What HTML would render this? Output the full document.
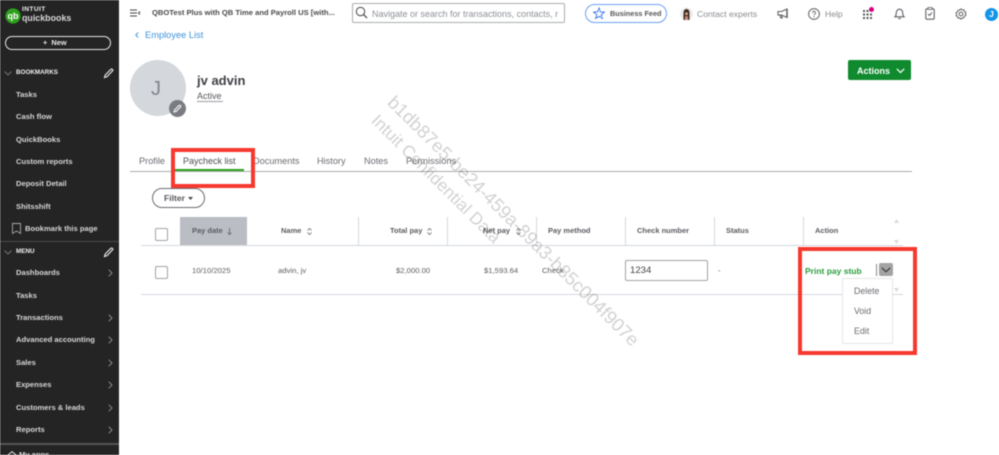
<!DOCTYPE html>
<html lang="en">
<head>
<meta charset="utf-8">
<title>Paycheck list</title>
<style>
html,body{margin:0;padding:0;background:#fff;}
body{width:999px;height:455px;overflow:hidden;position:relative;font-family:"Liberation Sans",sans-serif;color:#444;}
#p{position:absolute;left:0;top:0;width:999px;height:455px;overflow:hidden;background:#fff;filter:blur(.4px);}
.t{position:absolute;white-space:nowrap;line-height:12px;}
.b{position:absolute;}
.side{position:absolute;left:0;top:0;width:119px;height:455px;background:#242424;overflow:hidden;}
.s{position:absolute;left:16px;color:#d6d6d6;font-size:7.6px;line-height:10px;white-space:nowrap;font-weight:bold;}
.h{position:absolute;left:16px;color:#f0f0f0;font-size:6.3px;line-height:10px;font-weight:bold;white-space:nowrap;}
.th{font-size:7.5px;font-weight:bold;color:#5c5d62;}
.td{font-size:7.7px;color:#5c5d62;}
.tab{font-size:9.2px;color:#6b6c72;}
.vl{position:absolute;top:217px;width:1px;height:29px;background:#d4d7dc;}
svg{position:absolute;overflow:visible;}
.wm{position:absolute;white-space:nowrap;color:#d2d2d2;transform-origin:0 0;transform:rotate(44.8deg);line-height:18px;mix-blend-mode:multiply;}
.red{position:absolute;border:4px solid #f6382f;box-sizing:border-box;}
</style>
</head>
<body>
<div id="p">

<div class="side">
  <svg style="left:5px;top:8px" width="16" height="16" viewBox="0 0 16 16"><circle cx="8" cy="8" r="7.600" fill="#2ca01c"/><text x="8" y="11" font-size="9" font-weight="bold" fill="#fff" text-anchor="middle" font-family="Liberation Sans">qb</text></svg>
  <div class="t" style="left:22px;top:6px;font-size:6.600px;font-weight:bold;color:#eee;letter-spacing:.4px;line-height:8px;">INTUIT</div>
  <div class="t" style="left:22px;top:13px;font-size:8.900px;font-weight:bold;color:#d8d8d8;line-height:11px;">quickbooks</div>
  <div class="b" style="left:5px;top:36px;width:104px;height:12px;border:1px solid #e5e5e5;border-radius:7px;"></div>
  <div class="t" style="left:43px;top:37px;font-size:7.400px;font-weight:bold;color:#e8e8e8;line-height:12px;">+&nbsp;&nbsp;New</div>

  <svg style="left:4px;top:71px" width="8" height="5" viewBox="0 0 8 5"><path d="M.5.500 4 4 7.500.5" fill="none" stroke="#777" stroke-width=".9"/></svg>
  <div class="h" style="top:68px;">BOOKMARKS</div>
  <svg style="left:103px;top:68px" width="11" height="11" viewBox="0 0 11 11"><path d="M1.500 9.500 2.200 7 7.800 1.400a1 1 0 0 1 1.600 0 1 1 0 0 1 .2 1.400L4 8.600z" fill="none" stroke="#eee" stroke-width="1.100"/></svg>
  <div class="s" style="top:90px;">Tasks</div>
  <div class="s" style="top:112px;">Cash flow</div>
  <div class="s" style="top:135px;">QuickBooks</div>
  <div class="s" style="top:157px;">Custom reports</div>
  <div class="s" style="top:179px;">Deposit Detail</div>
  <div class="s" style="top:202px;">Shitsshift</div>
  <svg style="left:12px;top:223px" width="9" height="11" viewBox="0 0 9 11"><path d="M.5.500h8v10L4.500 8 .5 10.500z" fill="none" stroke="#aaa" stroke-width=".9"/></svg>
  <div class="s" style="left:25px;top:224px;">Bookmark this page</div>

  <div class="b" style="left:0;top:241px;width:119px;height:1px;background:#4a4a4a;"></div>
  <svg style="left:4px;top:250px" width="8" height="5" viewBox="0 0 8 5"><path d="M.5.500 4 4 7.500.5" fill="none" stroke="#777" stroke-width=".9"/></svg>
  <div class="h" style="top:247px;">MENU</div>
  <svg style="left:103px;top:247px" width="11" height="11" viewBox="0 0 11 11"><path d="M1.500 9.500 2.200 7 7.800 1.400a1 1 0 0 1 1.600 0 1 1 0 0 1 .2 1.400L4 8.600z" fill="none" stroke="#eee" stroke-width="1.100"/></svg>
  <div class="s" style="top:268px;">Dashboards</div>
  <div class="s" style="top:291px;">Tasks</div>
  <div class="s" style="top:313px;">Transactions</div>
  <div class="s" style="top:335px;">Advanced accounting</div>
  <div class="s" style="top:358px;">Sales</div>
  <div class="s" style="top:380px;">Expenses</div>
  <div class="s" style="top:403px;">Customers &amp; leads</div>
  <div class="s" style="top:425px;">Reports</div>
  <svg style="left:108px;top:269px" width="5" height="8" viewBox="0 0 5 8"><path d="M.7.700 4 4 .7 7.300" fill="none" stroke="#8a8a8a" stroke-width="1"/></svg>
  <svg style="left:108px;top:314px" width="5" height="8" viewBox="0 0 5 8"><path d="M.7.700 4 4 .7 7.300" fill="none" stroke="#8a8a8a" stroke-width="1"/></svg>
  <svg style="left:108px;top:336px" width="5" height="8" viewBox="0 0 5 8"><path d="M.7.700 4 4 .7 7.300" fill="none" stroke="#8a8a8a" stroke-width="1"/></svg>
  <svg style="left:108px;top:359px" width="5" height="8" viewBox="0 0 5 8"><path d="M.7.700 4 4 .7 7.300" fill="none" stroke="#8a8a8a" stroke-width="1"/></svg>
  <svg style="left:108px;top:381px" width="5" height="8" viewBox="0 0 5 8"><path d="M.7.700 4 4 .7 7.300" fill="none" stroke="#8a8a8a" stroke-width="1"/></svg>
  <svg style="left:108px;top:404px" width="5" height="8" viewBox="0 0 5 8"><path d="M.7.700 4 4 .7 7.300" fill="none" stroke="#8a8a8a" stroke-width="1"/></svg>
  <svg style="left:108px;top:426px" width="5" height="8" viewBox="0 0 5 8"><path d="M.7.700 4 4 .7 7.300" fill="none" stroke="#8a8a8a" stroke-width="1"/></svg>
  <div class="b" style="left:0;top:443px;width:119px;height:2px;background:#555;"></div>
  <svg style="left:7px;top:451px" width="10" height="8" viewBox="0 0 10 8"><path d="M1 4 5 .7 9 4v4" fill="none" stroke="#ddd" stroke-width="1"/></svg>
  <div class="s" style="left:19px;top:450px;">My apps</div>
</div>

<!-- Top bar -->
<svg style="left:130px;top:9px" width="11" height="8" viewBox="0 0 11 8"><path d="M0 1h7M0 4h7M0 7h7" stroke="#444" stroke-width="1"/><path d="M10 2.500 8.500 4 10 5.500" fill="none" stroke="#444" stroke-width="1"/></svg>
<div class="t" style="left:152px;top:7px;font-size:7.600px;font-weight:bold;color:#4a4a4a;">QBOTest Plus with QB Time and Payroll US [with...</div>
<div class="b" style="left:352px;top:3px;width:213px;height:20px;border:1px solid #a9acb0;border-radius:2px;box-sizing:border-box;"></div>
<svg style="left:355px;top:6px" width="13" height="13" viewBox="0 0 13 13"><circle cx="5.500" cy="5.500" r="4.200" fill="none" stroke="#555" stroke-width="1.100"/><path d="M8.500 8.500 12 12" stroke="#555" stroke-width="1.300"/></svg>
<div class="t" style="left:372px;top:8px;width:190px;overflow:hidden;font-size:9px;color:#8d9096;">Navigate or search for transactions, contacts, r</div>

<div class="b" style="left:585px;top:4px;width:82px;height:19px;border:1px solid #6c9ff5;border-radius:10px;box-sizing:border-box;"></div>
<svg style="left:593px;top:8px" width="12" height="11" viewBox="0 0 14 13"><path d="M7 .5 8.700 4.500 13 5 9.800 7.800 10.700 12 7 9.800 3.300 12 4.200 7.800 1 5 5.300 4.500z" fill="none" stroke="#3b78f0" stroke-width="1.500" stroke-dasharray="2.400 .8"/></svg>
<div class="t" style="left:610px;top:8px;font-size:7.300px;font-weight:bold;color:#555;">Business Feed</div>

<svg style="left:680px;top:7px" width="13" height="14" viewBox="0 0 13 14"><circle cx="6.500" cy="7" r="6.500" fill="#ececec"/><path d="M3.500 13V5.500a3 3.500 0 0 1 6 0V13z" fill="#3e2a22"/><path d="M5.200 5.500h2.600V8H5.200z" fill="#d9a78c"/><path d="M4.500 13l1-4h2l1 4z" fill="#c98e7b"/></svg>
<div class="t" style="left:697px;top:8px;font-size:8.600px;color:#8a8c91;">Contact experts</div>
<svg style="left:777px;top:8px" width="13" height="11" viewBox="0 0 13 11"><path d="M1 3.500h3.500L10 1v8.500L4.500 7H1zM3 7l.7 3h1.500L4.600 7" fill="none" stroke="#5f6166" stroke-width="1.100"/><path d="M10 1v8.500" stroke="#5f6166" stroke-width="1.500"/></svg>
<svg style="left:808px;top:8px" width="12" height="12" viewBox="0 0 12 12"><circle cx="6" cy="6" r="5.400" fill="none" stroke="#5f6166" stroke-width="1"/><path d="M4.500 4.700a1.500 1.500 0 1 1 2.200 1.400c-.5.300-.7.600-.7 1.100" fill="none" stroke="#5f6166" stroke-width=".9"/><circle cx="6" cy="8.800" r=".6" fill="#5f6166"/></svg>
<div class="t" style="left:825px;top:8px;font-size:8.600px;color:#8a8c91;">Help</div>
<svg style="left:862px;top:8px" width="11" height="11" viewBox="0 0 11 11" fill="#55575c"><rect x="1" y="2" width="2" height="2"/><rect x="4.500" y="2" width="2" height="2"/><rect x="1" y="5.500" width="2" height="2"/><rect x="4.500" y="5.500" width="2" height="2"/><rect x="8" y="5.500" width="2" height="2"/><rect x="1" y="9" width="2" height="2"/><rect x="4.500" y="9" width="2" height="2"/><rect x="8" y="9" width="2" height="2"/></svg>
<div class="b" style="left:869px;top:7px;width:5px;height:5px;border-radius:50%;background:#d4007f;"></div>
<svg style="left:894px;top:7px" width="11" height="13" viewBox="0 0 11 13"><path d="M1 9.800c1-1 1.300-2 1.300-4a3.200 3.600 0 0 1 6.400 0c0 2 .3 3 1.300 4z" fill="none" stroke="#5f6166" stroke-width="1.100"/><path d="M4.200 11.500h2.600" stroke="#5f6166" stroke-width="1.100"/></svg>
<svg style="left:925px;top:7px" width="10" height="13" viewBox="0 0 10 13"><rect x=".8" y="1.800" width="8.400" height="10.400" rx="1.200" fill="none" stroke="#5f6166" stroke-width="1.100"/><rect x="3" y=".5" width="4" height="2" fill="#fff" stroke="#5f6166" stroke-width=".8"/><path d="M3 7l1.500 1.500L7 5.500" fill="none" stroke="#5f6166" stroke-width="1"/></svg>
<svg style="left:955px;top:8px" width="12" height="12" viewBox="0 0 12 12"><path d="M6 .8 7.200 2l1.700-.2.500 1.600 1.500.8-.5 1.600.5 1.600-1.500.8-.5 1.600L7.200 10 6 11.200 4.800 10l-1.700.2-.5-1.600-1.500-.8.5-1.600-.5-1.600 1.500-.8.500-1.600L4.800 2z" fill="none" stroke="#5f6166" stroke-width="1"/><circle cx="6" cy="6" r="1.900" fill="none" stroke="#5f6166" stroke-width="1"/></svg>
<div class="b" style="left:985px;top:8px;width:13px;height:13px;border-radius:50%;background:#1295e8;color:#fff;font-size:8.500px;font-weight:bold;text-align:center;line-height:13px;">J</div>

<!-- Breadcrumb -->
<svg style="left:135px;top:32px" width="4" height="6" viewBox="0 0 4 6"><path d="M3.200.5.800 3l2.400 2.500" fill="none" stroke="#3d9be9" stroke-width="1"/></svg>
<div class="t" style="left:145px;top:29px;font-size:9.300px;color:#3f93dc;">Employee List</div>

<!-- Profile -->
<div class="b" style="left:130px;top:60px;width:56px;height:56px;border-radius:50%;background:#d4d7dc;"></div>
<div class="t" style="left:151px;top:79px;font-size:20px;line-height:20px;color:#83868c;">J</div>
<div class="b" style="left:169px;top:100px;width:17px;height:17px;border-radius:50%;background:#7a7c81;"></div>
<svg style="left:173px;top:104px" width="9" height="9" viewBox="0 0 9 9"><path d="M1 8 1.500 6 6 1.500a1 1 0 0 1 1.500 1.500L3 7.500z" fill="none" stroke="#fff" stroke-width="1"/></svg>
<div class="t" style="left:197px;top:73px;font-size:13px;font-weight:bold;line-height:15px;color:#3f4045;">jv advin</div>
<div class="t" style="left:197px;top:90px;font-size:9px;color:#55575c;">Active</div>
<div class="b" style="left:197px;top:101px;width:26px;height:1px;background:#9a9ca0;"></div>

<div class="b" style="left:848px;top:60px;width:63px;height:20px;background:#108a2e;border-radius:2px;"></div>
<div class="t" style="left:857px;top:65px;font-size:9px;font-weight:bold;color:#fff;">Actions</div>
<svg style="left:896px;top:68px" width="9" height="6" viewBox="0 0 9 6"><path d="M.8.800 4.500 4.500 8.200.8" fill="none" stroke="#fff" stroke-width="1.200"/></svg>

<!-- Tabs -->
<div class="t tab" style="left:139px;top:155px;">Profile</div>
<div class="t tab" style="left:183px;top:155px;color:#4d4e53;font-size:9px;">Paycheck list</div>
<div class="t tab" style="left:253px;top:155px;">Documents</div>
<div class="t tab" style="left:317px;top:155px;">History</div>
<div class="t tab" style="left:364px;top:155px;">Notes</div>
<div class="t tab" style="left:406px;top:155px;">Permissions</div>
<div class="b" style="left:130px;top:171px;width:782px;height:1px;background:#a8abaf;"></div>
<div class="b" style="left:175px;top:169px;width:69px;height:2px;background:#2ca01c;"></div>

<div class="b" style="left:152px;top:188px;width:53px;height:20px;border:1px solid #6b6c72;border-radius:10px;box-sizing:border-box;"></div>
<div class="t" style="left:164px;top:192px;font-size:8.600px;font-weight:bold;color:#55575c;">Filter</div>
<svg style="left:188px;top:197px" width="5" height="3" viewBox="0 0 5 3"><path d="M0 0h5L2.500 3z" fill="#444"/></svg>

<!-- Table -->
<div class="b" style="left:180px;top:217px;width:67px;height:29px;background:#babdc3;"></div>
<div class="b" style="left:141px;top:245px;width:762px;height:1px;background:#d4d7dc;"></div>
<div class="b" style="left:141px;top:294px;width:762px;height:1px;background:#d4d7dc;"></div>
<div class="vl" style="left:358px"></div>
<div class="vl" style="left:447px"></div>
<div class="vl" style="left:536px"></div>
<div class="vl" style="left:625px"></div>
<div class="vl" style="left:714px"></div>
<div class="vl" style="left:803px"></div>

<div class="b" style="left:155px;top:228px;width:11px;height:11px;border:1px solid #a0a2a6;border-radius:2px;"></div>
<div class="b" style="left:155px;top:266px;width:11px;height:11px;border:1px solid #a0a2a6;border-radius:2px;"></div>

<div class="t th" style="left:192px;top:225px;">Pay date</div>
<svg style="left:227px;top:228px" width="5" height="7" viewBox="0 0 5 7"><path d="M2.500 0v6.500M.5 4.500l2 2 2-2" fill="none" stroke="#666" stroke-width=".8"/></svg>
<div class="t th" style="left:281px;top:225px;">Name</div>
<div class="t th" style="left:390px;top:225px;">Total pay</div>
<div class="t th" style="left:483px;top:225px;">Net pay</div>
<svg style="left:307px;top:228px" width="5" height="7" viewBox="0 0 5 7"><path d="M.5 2.500l2-2 2 2M.5 4.500l2 2 2-2" fill="none" stroke="#666" stroke-width=".8"/></svg>
<svg style="left:427px;top:228px" width="5" height="7" viewBox="0 0 5 7"><path d="M.5 2.500l2-2 2 2M.5 4.500l2 2 2-2" fill="none" stroke="#666" stroke-width=".8"/></svg>
<svg style="left:516px;top:228px" width="5" height="7" viewBox="0 0 5 7"><path d="M.5 2.500l2-2 2 2M.5 4.500l2 2 2-2" fill="none" stroke="#666" stroke-width=".8"/></svg>
<div class="t th" style="left:548px;top:225px;">Pay method</div>
<div class="t th" style="left:637px;top:225px;">Check number</div>
<div class="t th" style="left:726px;top:225px;">Status</div>
<div class="t th" style="left:815px;top:225px;">Action</div>

<div class="t td" style="left:192px;top:265px;">10/10/2025</div>
<div class="t td" style="left:278px;top:265px;">advin, jv</div>
<div class="t td" style="left:396px;top:265px;">$2,000.00</div>
<div class="t td" style="left:484px;top:265px;">$1,593.64</div>
<div class="t td" style="left:542px;top:265px;">Check</div>
<div class="b" style="left:625px;top:260px;width:83px;height:21px;border:1px solid #a0a2a6;border-radius:2px;box-sizing:border-box;"></div>
<div class="t" style="left:630px;top:265px;font-size:9.600px;color:#444;">1234</div>
<div class="t td" style="left:718px;top:265px;">-</div>

<div class="t" style="left:805px;top:265px;font-size:8.500px;font-weight:bold;color:#2a9d3e;">Print pay stub</div>
<div class="b" style="left:876px;top:264px;width:1px;height:12px;background:#888;"></div>
<div class="b" style="left:879px;top:263px;width:14px;height:13px;background:#a3a3a3;border-radius:2px;"></div>
<svg style="left:881px;top:267px" width="10" height="6" viewBox="0 0 10 6"><path d="M.8.800 5 4.800 9.200.8" fill="none" stroke="#333" stroke-width="1.100"/></svg>

<svg style="left:894px;top:219px" width="5" height="4" viewBox="0 0 5 4"><path d="M0 4h5L2.500 0z" fill="#d8dade"/></svg>
<svg style="left:894px;top:240px" width="5" height="4" viewBox="0 0 5 4"><path d="M0 0h5L2.500 4z" fill="#d8dade"/></svg>
<svg style="left:894px;top:288px" width="5" height="4" viewBox="0 0 5 4"><path d="M0 0h5L2.500 4z" fill="#d8dade"/></svg>

<div class="b" style="left:842px;top:278px;width:51px;height:66px;background:#fff;border:1px solid #e3e5e8;border-radius:2px;box-sizing:border-box;"></div>
<div class="t" style="left:854px;top:285px;font-size:8.800px;color:#6b6c72;">Delete</div>
<div class="t" style="left:854px;top:305px;font-size:8.800px;color:#6b6c72;">Void</div>
<div class="t" style="left:854px;top:325px;font-size:8.800px;color:#6b6c72;">Edit</div>

<!-- Watermark -->
<div class="wm" style="left:397px;top:93px;font-size:18.400px;">b1db87e5-be24-459a-89a3-b85c004f907e</div>
<div class="wm" style="left:381px;top:111px;font-size:17.200px;">Intuit Confidential Data</div>

<!-- Red highlight boxes -->
<div class="red" style="left:171px;top:148px;width:84px;height:40px;"></div>
<div class="red" style="left:798px;top:247px;width:119px;height:108px;"></div>

</div>
</body>
</html>
